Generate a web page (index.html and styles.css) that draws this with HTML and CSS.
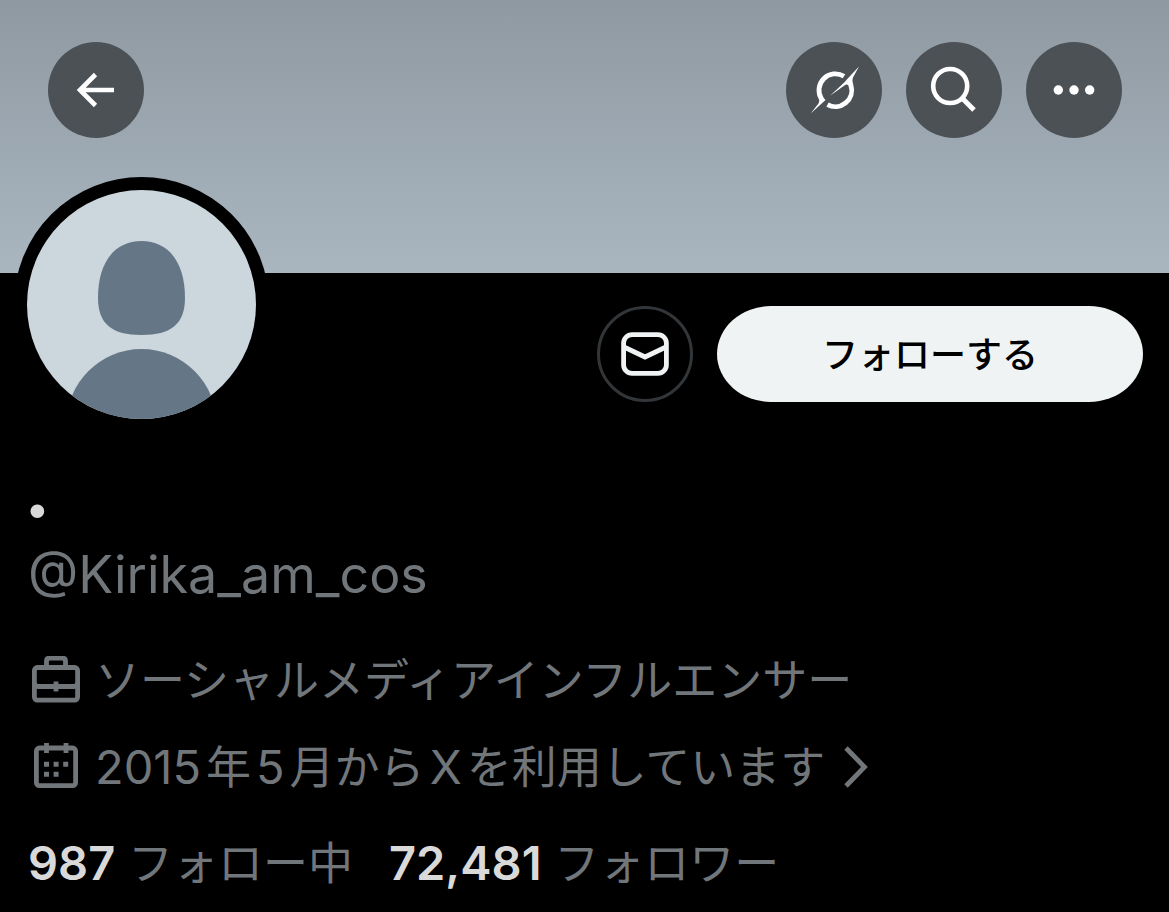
FILE: index.html
```html
<!DOCTYPE html>
<html lang="ja">
<head>
    <meta charset="UTF-8">
    <meta name="viewport" content="width=device-width, initial-scale=1.0">
    <title>@Kirika_am_cos</title>
    <link rel="stylesheet" href="styles.css">
</head>
<body>

    <header class="banner">
        <button class="round-btn back" aria-label="戻る">
            <svg viewBox="0 0 96 96"><path d="M66 48H32M47.500 32.500L32 48L47.500 63.500" fill="none" stroke="#fff" stroke-width="4.600"/></svg>
        </button>
        <button class="round-btn" aria-label="Grok">
            <svg viewBox="0 0 96 96" fill="#fff">
                <path d="M58 34.300A16.400 16.400 0 0 0 35.500 57M41.500 62.700A16.400 16.400 0 0 0 65 43.500" fill="none" stroke="#fff" stroke-width="4.800"/>
                <path d="M44 53.700L58.500 40.200L61.500 36.800L73 24.500L67.500 34.500Q65.500 38 67.300 42.500L63 45.500Q62.500 41.500 59.500 42.700Z"/>
                <path d="M24.700 71.500L32.500 61.500Q34 59.300 32.800 56.500L36.800 55L39.500 58L36.500 60.800Z"/>
            </svg>
        </button>
        <button class="round-btn" aria-label="検索">
            <svg viewBox="0 0 96 96" fill="none" stroke="#fff"><circle cx="44.200" cy="44" r="17" stroke-width="4.600"/><path d="M56 56L68 68" stroke-width="5"/></svg>
        </button>
        <button class="round-btn" aria-label="その他">
            <svg viewBox="0 0 96 96" fill="#fff"><circle cx="32.300" cy="48" r="4.700"/><circle cx="48" cy="48" r="4.700"/><circle cx="63.700" cy="48" r="4.700"/></svg>
        </button>
    </header>

    <main class="profile">
        <div class="top-row">
            <svg class="avatar" viewBox="0 0 229 229" role="img" aria-label="プロフィール画像">
                <rect width="229" height="229" fill="#ccd6dd"/>
                <path d="M114.500 51C142 51 158 73 158 108C158 134 144 145 114.500 145C85 145 71 134 71 108C71 73 87 51 114.500 51Z" fill="#657786"/>
                <circle cx="114.500" cy="234" r="75" fill="#657786"/>
            </svg>
            <div class="actions">
                <button class="mail-btn" aria-label="メッセージ">
                    <svg viewBox="0 0 48 48" fill="none" stroke="#eff3f4" stroke-width="4.800"><rect x="2.600" y="4.600" width="42.800" height="38.800" rx="8.500"/><path d="M3 17L24 27L45 17"/></svg>
                </button>
                <button class="follow-btn">フォローする</button>
            </div>
        </div>

        <h1 class="name">.</h1>
        <p class="handle">@Kirika_am_cos</p>

        <div class="info">
            <svg class="icon" viewBox="0 0 50 50" fill="none" stroke="#71767b" stroke-width="4.800"><rect x="3.400" y="11.500" width="43.200" height="32.600" rx="3"/><path d="M15.500 11V5Q15.500 2 19 2H31Q34.500 2 34.500 5V11M3.500 27.500Q4 30.500 7.500 30.500H42.500Q46 30.500 46.500 27.500M25 25.500V35.500"/></svg>
            <span>ソーシャルメディアインフルエンサー</span>
        </div>
        <a class="info" href="#">
            <svg class="icon" viewBox="0 0 50 50" fill="none" stroke="#71767b" stroke-width="4.800"><rect x="5.400" y="5" width="39.200" height="37.600" rx="3"/><path d="M15.500 0V10M35 0V10"/><path d="M13 21.200H37.200M13 31.200H27.600" stroke-width="5" stroke-dasharray="5 4.600"/></svg>
            <span><span class="latin">2015</span>年<span class="latin">5</span>月から<span class="latin">X</span>を利用しています</span>
            <svg class="chevron" viewBox="0 0 26 44" fill="none" stroke="#71767b" stroke-width="4.800"><path d="M3 2L21.500 21L3 40"/></svg>
        </a>

        <div class="stats">
            <a href="#"><strong>987</strong> フォロー中</a>
            <a href="#"><strong>72,481</strong> フォロワー</a>
        </div>
    </main>

</body>
</html>
```

FILE: styles.css
```css
:root {
    --bg-color: #000;
    --text-color: #d9d9d9;
    --muted-color: #71767b;
}
* { box-sizing: border-box; }
body {
    margin: 0;
    background-color: var(--bg-color);
    color: var(--muted-color);
    font-family: Inter, "Noto Sans CJK JP", sans-serif;
    font-size: 45px;
}
button {
    padding: 0;
    border: none;
    cursor: pointer;
}
a { color: inherit; text-decoration: none; }
svg { display: block; flex: none; }

/* Banner */
.banner {
    display: flex;
    gap: 24px;
    height: 273px;
    padding: 42px 47px 0 48px;
    background: linear-gradient(#8f99a2, #a9b6c0);
}
.round-btn {
    width: 96px;
    height: 96px;
    border-radius: 50%;
    background-color: #4c5156;
}
.back { margin-right: auto; }

/* Profile */
.profile { padding: 0 26px 0 28px; }
.top-row {
    display: flex;
    justify-content: space-between;
    margin-top: -96px;
}
.avatar {
    width: 255px;
    height: 255px;
    margin-left: -14px;
    border: 13px solid var(--bg-color);
    border-radius: 50%;
    background-color: var(--bg-color);
}
.actions {
    display: flex;
    gap: 24px;
    padding-top: 129px;
}
.mail-btn {
    display: flex;
    align-items: center;
    justify-content: center;
    width: 96px;
    height: 96px;
    border: 3px solid #333639;
    border-radius: 50%;
    background: none;
}
.mail-btn svg { width: 48px; }
.follow-btn {
    width: 426px;
    height: 96px;
    padding-bottom: 4px;
    border-radius: 54px / 48px;
    background-color: #eff3f4;
    color: #000;
    font-family: inherit;
    font-size: 36px;
    font-weight: 500;
}

.name {
    margin: 20px 0 0 -4px;
    color: var(--text-color);
    font-size: 80px;
    line-height: 72px;
}
.handle {
    margin: 19px 0 30px;
    font-size: 52px;
    line-height: 64px;
}
.info {
    display: flex;
    align-items: center;
    height: 87px;
    line-height: 64px;
}
.icon {
    width: 50px;
    margin: 0 14px 0 3px;
}
.latin {
    margin: 0 5px;
    font-size: 47px;
}
.latin:first-child { margin-left: 0; }
.chevron {
    width: 26px;
    margin-left: 18px;
}
.stats {
    display: flex;
    gap: 36px;
    margin-top: 20px;
    line-height: 64px;
}
.stats strong {
    color: var(--text-color);
    font-size: 47px;
    font-weight: 600;
}
```
